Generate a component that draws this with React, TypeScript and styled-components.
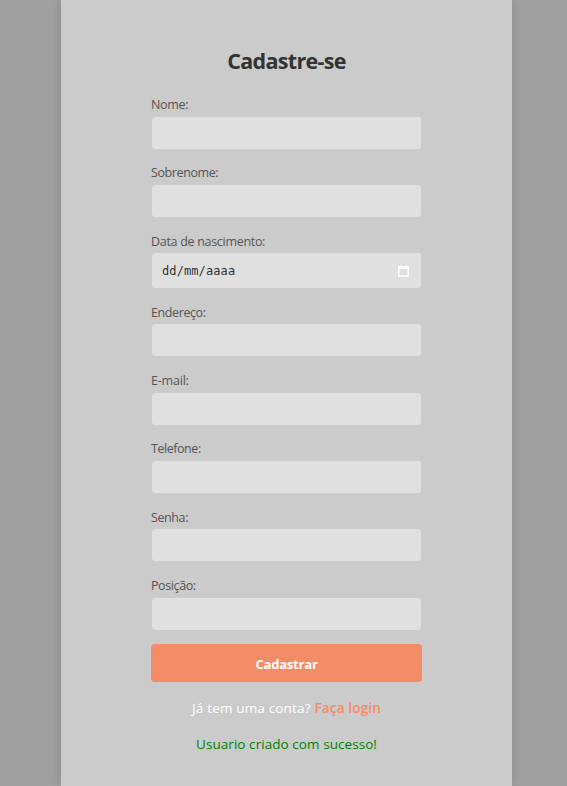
import React from 'react';
import styled, { createGlobalStyle } from 'styled-components';

const GlobalStyle = createGlobalStyle`
  * { box-sizing: border-box; }
  body {
    margin: 0;
    background: #a0a0a0;
    font-family: 'Open Sans', 'Noto Sans', sans-serif;
    overflow: hidden;
  }
`;

const Page = styled.main`
  display: flex;
  height: 786px;
  padding-left: 61px;
`;

const Card = styled.section`
  display: flex;
  flex-direction: column;
  width: 451px;
  height: 786px;
  padding: 46px 90px 0;
  background: #cbcbcb;
  box-shadow: 0 0 10px rgba(0, 0, 0, 0.15);
`;

const Title = styled.h1`
  margin: 0 0 18.8px;
  font-size: 21.5px;
  line-height: 30px;
  font-weight: 700;
  letter-spacing: -0.7px;
  text-align: center;
  color: #333;
`;

const Form = styled.form`
  display: flex;
  flex-direction: column;
`;

const Field = styled.div`
  display: flex;
  flex-direction: column;
  margin-bottom: 13.33px;
`;

const Label = styled.label<{ $spacing: number }>`
  height: 21px;
  padding-top: 0.15px;
  font-size: 12.5px;
  line-height: 19px;
  letter-spacing: ${({ $spacing }) => $spacing}px;
  white-space: nowrap;
  color: #555;
`;

const control = `
  width: 271px;
  border: 1px solid #cccccc;
  border-radius: 4px;
  background: #e0e0e0;
`;

const Input = styled.input`
  ${control}
  height: 34px;
  padding: 8px 10px;
  outline: none;
`;

const DateBox = styled.div`
  ${control}
  display: flex;
  align-items: center;
  justify-content: space-between;
  height: 36.66px;
  padding: 0 12px 0 10px;
  font-family: 'DejaVu Sans Mono', monospace;
  font-size: 12px;
  letter-spacing: 0.1px;
  color: #333;
`;

const Button = styled.button`
  height: 38px;
  margin-top: -0.3px;
  padding: 2px 0 0;
  border: 0;
  border-radius: 4px;
  background: #f48c67;
  color: #fff;
  font: 700 13px 'Open Sans', sans-serif;
  letter-spacing: -0.2px;
`;

const Prompt = styled.p`
  margin: 16px 0 0;
  font-size: 13.5px;
  line-height: 20px;
  letter-spacing: 0.17px;
  text-align: center;
  white-space: nowrap;
  color: #fff;
`;

const Login = styled.a`
  font-weight: 600;
  color: #f48c67;
`;

const Success = styled(Prompt)`
  letter-spacing: 0.06px;
  color: #008000;
`;

function CalendarIcon() {
  return (
    <svg width="11" height="12" viewBox="0 0 11 12">
      <path fill="#fff" fillRule="evenodd" d="M2 0h1.2v1h4.6V0H9v1h.8c.7 0 1.2.5 1.2 1.2v8.6c0 .7-.5 1.2-1.2 1.2H1.2C.5 12 0 11.500 0 10.800V2.200C0 1.500.5 1 1.200 1H2V0ZM1.500 4v6.500h8V4h-8Z" />
    </svg>
  );
}

const fields = [
  { id: 'nome', label: 'Nome:', spacing: -0.3 },
  { id: 'sobrenome', label: 'Sobrenome:', spacing: -0.4 },
  { id: 'nascimento', label: 'Data de nascimento:', spacing: -0.3, date: true },
  { id: 'endereco', label: 'Endereço:', spacing: -0.4 },
  { id: 'email', label: 'E-mail:', spacing: -0.2 },
  { id: 'telefone', label: 'Telefone:', spacing: -0.45 },
  { id: 'senha', label: 'Senha:', spacing: -0.4 },
  { id: 'posicao', label: 'Posição:', spacing: -0.4 },
];

export default function App() {
  return (
    <Page>
      <GlobalStyle />
      <Card>
        <Title>Cadastre-se</Title>
        <Form>
          {fields.map(({ id, label, spacing, date }) => (
            <Field key={id}>
              <Label htmlFor={id} $spacing={spacing}>{label}</Label>
              {date ? (
                <DateBox id={id}>dd/mm/aaaa<CalendarIcon /></DateBox>
              ) : (
                <Input id={id} type={id === 'senha' ? 'password' : 'text'} />
              )}
            </Field>
          ))}
          <Button type="button">Cadastrar</Button>
        </Form>
        <Prompt>Já tem uma conta? <Login>Faça login</Login></Prompt>
        <Success>Usuario criado com sucesso!</Success>
      </Card>
    </Page>
  );
}
